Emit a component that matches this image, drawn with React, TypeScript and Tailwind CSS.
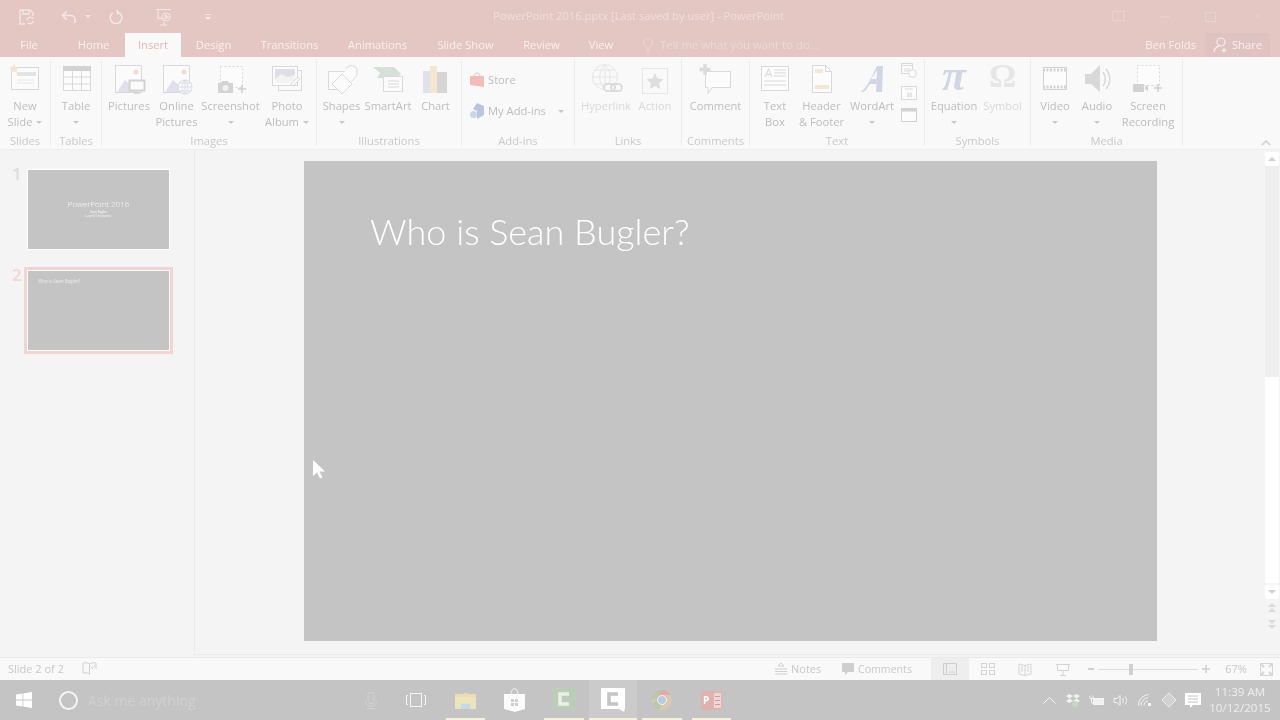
import type { ReactNode } from "react";

const line = "#d9d9d9";
const soft = "#e6e6e6";

function Box({ children }: { children: ReactNode }) {
  return (
    <svg viewBox="0 0 40 38" className="h-[38px] w-[40px] shrink-0" fill="none" aria-hidden>
      {children}
    </svg>
  );
}

const icons: Record<string, ReactNode> = {
  newSlide: (
    <Box>
      <rect x="6.5" y="7.5" width="27" height="22" fill="#fbfbfb" stroke={line} />
      <rect x="12" y="12" width="19" height="4" fill="#e4e4e4" />
      <path d="M12 20h17M12 23h17" stroke={soft} />
      <path d="M9 4l1.5 3 3 .5-2 2.5.5 3-3-1.5-3 1.5.5-3-2-2.5 3-.5z" fill="#f4e4cf" />
    </Box>
  ),
  table: (
    <Box>
      <rect x="7.5" y="6.5" width="27" height="24" fill="#fcfcfc" stroke={line} />
      <rect x="7" y="6" width="28" height="5" fill="#d2d2d2" />
      <path d="M7 17h28M7 24h28M16.5 11v19M25.5 11v19" stroke={line} />
    </Box>
  ),
  pictures: (
    <Box>
      <rect x="6.5" y="5.5" width="26" height="27" fill="#fbfbfb" stroke={line} />
      <circle cx="27" cy="12" r="2.5" fill="#f2d9d6" />
      <path d="M8 32l8-12 8 7 4 5z" fill="#e1e1ec" />
      <rect x="20.5" y="20.5" width="15" height="10" fill="#fbfbfb" stroke="#d2d2d2" strokeWidth="2" />
      <path d="M25 33h6" stroke="#d2d2d2" strokeWidth="1.5" />
    </Box>
  ),
  online: (
    <Box>
      <rect x="6.5" y="5.5" width="26" height="27" fill="#fbfbfb" stroke={line} />
      <circle cx="27" cy="12" r="2.5" fill="#f2d9d6" />
      <path d="M8 32l8-12 8 7 4 5z" fill="#e1e1ec" />
      <circle cx="28" cy="27" r="7" fill="#fbfbfb" stroke="#d3d8e6" />
      <path d="M21 27h14M28 20v14M23 23h10M23 31h10M28 20c-4 4-4 10 0 14M28 20c4 4 4 10 0 14" stroke="#d3d8e6" strokeWidth="0.8" />
    </Box>
  ),
  screenshot: (
    <Box>
      <rect x="9.5" y="6.5" width="22" height="21" fill="#fcfcfc" stroke={line} strokeDasharray="2 2" />
      <path d="M7 23h3l1-2h6l1 2h4v10H7z" fill="#d3d3d3" />
      <circle cx="14.5" cy="28" r="3" fill="#f2f2f2" />
      <path d="M31 25v8M27 29h8" stroke="#d0d0d0" strokeWidth="1.6" />
    </Box>
  ),
  album: (
    <Box>
      <rect x="11.5" y="10.5" width="23" height="20" fill="#fafafa" stroke={line} />
      <rect x="5.5" y="6.5" width="25" height="19" fill="#fbfbfb" stroke={line} />
      <rect x="8" y="9" width="20" height="14" fill="#dedee4" />
      <path d="M8 19l6-5 7 3 7-2v8H8z" fill="#f3f3f3" />
      <path d="M24 24l7-7 2 2-7 7z" fill="#fbfbfb" stroke={line} />
    </Box>
  ),
  shapes: (
    <Box>
      <rect x="6.5" y="11.5" width="18" height="18" fill="#fbfbfb" stroke={line} />
      <path d="M24 9c3-6 12-4 11 4-.5 5-6 9-11 13-1-1-4-4-6-6" fill="#fbfbfb" stroke={line} />
      <path d="M20 14l10 10-10 10-10-10z" fill="#fbfbfb" stroke={line} />
    </Box>
  ),
  smartart: (
    <Box>
      <path d="M5 7h21l7 7-4 4H9l3-5z" fill="#d4e0d8" />
      <rect x="15.5" y="16.5" width="19" height="15" fill="#fbfbfb" stroke={line} />
      <path d="M20 21h11M20 24h11M20 27h11" stroke={line} />
    </Box>
  ),
  chart: (
    <Box>
      <rect x="7" y="11" width="8" height="22" fill="#e0e1ec" />
      <rect x="14" y="6" width="7" height="27" fill="#f4e7cf" />
      <rect x="21" y="12" width="10" height="21" fill="#d5d5d5" />
    </Box>
  ),
  hyperlink: (
    <Box>
      <circle cx="19" cy="17" r="12.5" stroke={soft} />
      <path d="M6.5 17h25M19 4.500v25M9 10h20M9 24h20M19 4.500c-7 7-7 18 0 25M19 4.500c7 7 7 18 0 25" stroke={soft} />
      <rect x="18" y="24" width="11" height="7" rx="3.500" stroke="#dcdcdc" strokeWidth="2" fill="#fafafa" />
      <rect x="25" y="24" width="11" height="7" rx="3.500" stroke="#dcdcdc" strokeWidth="2" />
    </Box>
  ),
  action: (
    <Box>
      <rect x="7.500" y="8.500" width="25" height="25" stroke={soft} />
      <path d="M20 13l2.500 5.500 6 .7-4.500 4 1.300 5.800-5.300-3-5.300 3 1.300-5.800-4.500-4 6-.7z" fill="#dedede" />
    </Box>
  ),
  comment: (
    <Box>
      <path d="M9.500 11.500h25v16H16l-4 6v-6H9.500z" fill="#fcfcfc" stroke={line} />
      <path d="M9 4v11M3.500 9.500h11" stroke="#dcdcdc" strokeWidth="3.500" />
    </Box>
  ),
  textBox: (
    <Box>
      <rect x="6.500" y="6.500" width="27" height="24" fill="#fcfcfc" stroke={line} />
      <path d="M10 17l3.500-8 3.500 8M11.500 14.500h4" stroke="#dcdfe9" strokeWidth="1.300" />
      <path d="M19 10h12M19 13h12M19 16h12M9 21h22M9 25h22" stroke={line} />
    </Box>
  ),
  header: (
    <Box>
      <path d="M10.500 5.500h13l6 6v21h-19z" fill="#fcfcfc" stroke={line} />
      <path d="M23.500 5.500v6h6" stroke={line} />
      <rect x="13" y="9" width="8" height="4" fill="#f3e6d2" />
      <rect x="13" y="25" width="14" height="4" fill="#f3e6d2" />
    </Box>
  ),
  wordArt: (
    <Box>
      <path fillRule="evenodd" d="M8 32c6-2 11-14 17-26h6l-1 26h-6l.5-8h-7l-3.500 6-3 2zM19 19h5.500l.5-9z" fill="#d0d6e4" />
    </Box>
  ),
  video: (
    <Box>
      <rect x="8.500" y="7.500" width="23" height="22" fill="#fcfcfc" stroke="#d2d2d2" />
      <path d="M8 10h24M8 27h24" stroke="#d2d2d2" strokeWidth="3" strokeDasharray="2 1.500" />
    </Box>
  ),
  audio: (
    <Box>
      <path d="M8 14h6l9-9v27l-9-8H8z" fill="#d8d8d8" />
      <path d="M26 12c3 4 3 10 0 14M29 9c5 6 5 14 0 20" stroke="#d8d8d8" strokeWidth="1.500" />
    </Box>
  ),
  screenRec: (
    <Box>
      <rect x="9.500" y="5.500" width="22" height="20" fill="#fcfcfc" stroke={line} strokeDasharray="2 2" />
      <rect x="5" y="24" width="11" height="8" fill="#d3d3d3" />
      <path d="M17 27l3-2v6l-3-2z" fill="#d3d3d3" />
      <path d="M30 24v8M26 28h8" stroke="#d0d0d0" strokeWidth="1.600" />
    </Box>
  ),
};

type Btn = { w: string; icon: ReactNode; a: string; b?: string; caret?: "line" | "inline"; off?: boolean };

function Caret({ className = "" }: { className?: string }) {
  return <span className={`inline-block h-0 w-0 border-x-[3px] border-t-[3px] border-x-transparent border-t-[#c9c9c9] ${className}`} />;
}

function RibbonButton({ w, icon, a, b, caret, off }: Btn) {
  return (
    <div className={`flex shrink-0 flex-col items-center ${w} ${off ? "text-[#d9d9d9]" : "text-[#bdbdbd]"}`}>
      <div className="flex h-[38px] shrink-0 items-start justify-center">{icon}</div>
      <span className="whitespace-nowrap leading-4">{a}</span>
      {b && (
        <span className="flex items-center gap-1 whitespace-nowrap leading-4">
          {b}
          {caret === "inline" && <Caret />}
        </span>
      )}
      {caret === "line" && <Caret className="mt-[7px]" />}
    </div>
  );
}

function Group({ w, label, pad, children }: { w: string; label: string; pad: string; children: ReactNode }) {
  return (
    <section className={`flex h-full shrink-0 flex-col border-r border-[#ececec] ${w}`}>
      <div className={`flex h-[73px] shrink-0 ${pad}`}>{children}</div>
      <div className="h-4 shrink-0 text-center leading-4 text-[#c9c9c9]">{label}</div>
    </section>
  );
}

function RibbonTab({ w, label, active }: { w: string; label: string; active?: boolean }) {
  return (
    <div
      className={`flex h-6 shrink-0 items-center justify-center ${w} ${
        active ? "bg-[#f9f9f9] text-[#e4b7b3]" : "text-[#f9f0ef]"
      }`}
    >
      {label}
    </div>
  );
}

function Ribbon() {
  return (
    <div className="flex h-[93px] shrink-0 border-b border-[#eeeeee] bg-[#f9f9f9] pt-[3px] pb-[3px] text-[11.2px]">
      <Group w="w-[51px]" label="Slides" pad="">
        <RibbonButton w="w-[50px]" icon={icons.newSlide} a="New" b="Slide" caret="inline" />
      </Group>
      <Group w="w-[51px]" label="Tables" pad="">
        <RibbonButton w="w-[50px]" icon={icons.table} a="Table" caret="line" />
      </Group>
      <Group w="w-[215px]" label="Images" pad="pl-[3px]">
        <RibbonButton w="w-[48px]" icon={icons.pictures} a="Pictures" />
        <RibbonButton w="w-[47px]" icon={icons.online} a="Online" b="Pictures" />
        <RibbonButton w="w-[61px]" icon={icons.screenshot} a="Screenshot" caret="line" />
        <RibbonButton w="w-[52px]" icon={icons.album} a="Photo" b="Album" caret="inline" />
      </Group>
      <Group w="w-[145px]" label="Illustrations" pad="pl-[2px]">
        <RibbonButton w="w-[45px]" icon={icons.shapes} a="Shapes" caret="line" />
        <RibbonButton w="w-[48px]" icon={icons.smartart} a="SmartArt" />
        <RibbonButton w="w-[47px]" icon={icons.chart} a="Chart" />
      </Group>
      <Group w="w-[113px]" label="Add-ins" pad="flex-col pl-[8px] pt-[11px] gap-[13px] text-[#bdbdbd]">
        <div className="flex h-[18px] items-center gap-[4px]">
          <svg viewBox="0 0 14 16" className="h-4 w-[14px]" aria-hidden>
            <path d="M0 4h14v11l-14-2z" fill="#f1bdb8" />
            <path d="M4 4c0-4 6-4 6 0" stroke="#f1bdb8" fill="none" />
          </svg>
          Store
        </div>
        <div className="flex h-[18px] items-center gap-[4px]">
          <svg viewBox="0 0 14 16" className="h-4 w-[14px]" aria-hidden>
            <path d="M7 0l7 3v9l-7 4V8L3 6z" fill="#b9c6dd" />
            <circle cx="3.500" cy="11.500" r="3.500" fill="#ccd6e8" />
          </svg>
          My Add-ins
          <Caret className="ml-[8px]" />
        </div>
      </Group>
      <Group w="w-[107px]" label="Links" pad="pl-[4px]">
        <RibbonButton w="w-[54px]" icon={icons.hyperlink} a="Hyperlink" off />
        <RibbonButton w="w-[44px]" icon={icons.action} a="Action" off />
      </Group>
      <Group w="w-[68px]" label="Comments" pad="">
        <RibbonButton w="w-[67px]" icon={icons.comment} a="Comment" />
      </Group>
      <Group w="w-[175px]" label="Text" pad="pl-[4px]">
        <RibbonButton w="w-[42px]" icon={icons.textBox} a="Text" b="Box" />
        <RibbonButton w="w-[51px]" icon={icons.header} a="Header" b="&amp; Footer" />
        <RibbonButton w="w-[50px]" icon={icons.wordArt} a="WordArt" caret="line" />
        <div className="flex w-[24px] flex-col items-center gap-[8px] pt-[3px]">
          <svg viewBox="0 0 16 15" className="h-[15px] w-4" fill="none" aria-hidden>
            <rect x="0.500" y="0.500" width="11" height="10" fill="#fbfbfb" stroke={line} />
            <path d="M0 2.500h12M3 6h6M3 8h6" stroke="#dcdcdc" />
            <circle cx="11.500" cy="10.500" r="3.800" fill="#fbfbfb" stroke={line} />
          </svg>
          <svg viewBox="0 0 16 14" className="h-[14px] w-4" fill="none" aria-hidden>
            <rect x="0.500" y="0.500" width="15" height="13" fill="#fcfcfc" stroke={line} />
            <path d="M4 3h8M6 8h5M6 10h5M7 6.500v5M10 6.500v5" stroke="#d6d6d6" strokeWidth="0.800" />
          </svg>
          <svg viewBox="0 0 16 14" className="h-[14px] w-4" fill="none" aria-hidden>
            <rect x="0.500" y="0.500" width="15" height="13" fill="#fcfcfc" stroke="#d2d2d2" />
            <rect x="0" y="0" width="16" height="3.500" fill="#d2d2d2" />
          </svg>
        </div>
      </Group>
      <Group w="w-[106px]" label="Symbols" pad="pl-[4px]">
        <div className="flex w-[50px] shrink-0 flex-col items-center text-[#bdbdbd]">
          <span className="flex h-[38px] shrink-0 items-start font-['Liberation_Serif',serif] text-[44px] italic leading-[32px] font-bold text-[#d0d6e4]">π</span>
          <span className="leading-4">Equation</span>
          <Caret className="mt-[7px]" />
        </div>
        <div className="flex w-[47px] shrink-0 flex-col items-center text-[#d9d9d9]">
          <span className="flex h-[38px] shrink-0 items-start font-['Liberation_Serif',serif] text-[34px] leading-[32px] font-bold text-[#e6e6e6]">Ω</span>
          <span className="leading-4">Symbol</span>
        </div>
      </Group>
      <Group w="w-[152px]" label="Media" pad="pl-[3px]">
        <RibbonButton w="w-[42px]" icon={icons.video} a="Video" caret="line" />
        <RibbonButton w="w-[42px]" icon={icons.audio} a="Audio" caret="line" />
        <RibbonButton w="w-[60px]" icon={icons.screenRec} a="Screen" b="Recording" />
      </Group>
      <div className="flex flex-1 items-end justify-end pr-[9px]">
        <svg viewBox="0 0 10 6" className="h-[6px] w-[10px]" fill="none" aria-hidden>
          <path d="M1 5l4-4 4 4" stroke="#cfcfcf" strokeWidth="1.500" />
        </svg>
      </div>
    </div>
  );
}

function TitleBar() {
  return (
    <div className="flex h-[33px] shrink-0 items-center bg-[#e4c6c3]">
      <div className="flex w-[493px] shrink-0 items-center pl-[19px]">
        <svg viewBox="0 0 16 16" className="h-4 w-4" fill="none" stroke="#f5e7e5" strokeWidth="1.300" aria-hidden>
          <path d="M1 1h10l3 3v3M1 1v14h5M4 1v4h6V1" />
          <path d="M8 11a3.500 3.500 0 016-1.500M14.500 12a3.500 3.500 0 01-6 1.500" />
        </svg>
        <svg viewBox="0 0 16 14" className="ml-[26px] h-[14px] w-4" fill="none" stroke="#f5e7e5" strokeWidth="1.600" aria-hidden>
          <path d="M6 1L1.500 5.500 6 10M2 5.500h8a4 4 0 014 4V13" />
        </svg>
        <Caret className="ml-[8px] border-t-[#f5e7e5]" />
        <svg viewBox="0 0 14 14" className="ml-[18px] h-[14px] w-[14px]" fill="none" stroke="#f5e7e5" strokeWidth="1.600" aria-hidden>
          <path d="M8.500 2.200A5.800 5.800 0 113.500 3.200M8.500 0v4.500" />
        </svg>
        <svg viewBox="0 0 18 18" className="ml-[32px] h-[18px] w-[18px]" fill="none" stroke="#f5e7e5" strokeWidth="1.100" aria-hidden>
          <path d="M1 1.500h15M3 1.500v9h5M9 14v3M5 17h7" />
          <circle cx="11" cy="9" r="4" />
          <path d="M10 7l3 2-3 2z" />
        </svg>
        <svg viewBox="0 0 8 8" className="ml-[31px] h-2 w-2" fill="#f5e7e5" aria-hidden>
          <path d="M1 1h6v1H1zM1 4h6L4 7z" />
        </svg>
      </div>
      <div className="whitespace-nowrap text-[11.2px] text-[#f0dedc]">PowerPoint 2016.pptx [Last saved by user] - PowerPoint</div>
      <div className="ml-auto flex items-center pr-[19px]">
        <svg viewBox="0 0 149 12" className="h-3 w-[149px]" fill="none" stroke="#e9d3d0" aria-hidden>
          <rect x="0.500" y="0.500" width="12" height="9" />
          <path d="M48 6h10" />
          <rect x="93.500" y="1.500" width="10" height="9" />
          <path d="M143 2l6 6M149 2l-6 6" />
        </svg>
      </div>
    </div>
  );
}

function TabRow() {
  return (
    <div className="flex h-6 shrink-0 items-center bg-[#e4c6c3] text-[11.2px]">
      <RibbonTab w="w-[58px] mr-[4px]" label="File" />
      <RibbonTab w="w-[63px]" label="Home" />
      <RibbonTab w="w-[56px]" label="Insert" active />
      <RibbonTab w="w-[65px]" label="Design" />
      <RibbonTab w="w-[87px]" label="Transitions" />
      <RibbonTab w="w-[89px]" label="Animations" />
      <RibbonTab w="w-[87px]" label="Slide Show" />
      <RibbonTab w="w-[65px]" label="Review" />
      <RibbonTab w="w-[54px]" label="View" />
      <div className="ml-[15px] flex items-center gap-[7px] text-[11.400px] text-[#eed9d7]">
        <svg viewBox="0 0 10 14" className="h-[14px] w-[10px]" fill="none" stroke="#eed9d7" aria-hidden>
          <path d="M3 10c0-2-2.500-3-2.500-5.500a4.500 4.500 0 019 0C9.500 7 7 8 7 10zM3.500 12h3M4 13.500h2" />
        </svg>
        Tell me what you want to do...
      </div>
      <div className="ml-auto text-[#f9f0ef]">Ben Folds</div>
      <div className="ml-[9px] mr-[10px] flex h-6 w-[65px] items-center justify-center gap-[3px] bg-[#dfc3c0] text-[#f9f0ef]">
        <svg viewBox="0 0 16 16" className="h-4 w-4" fill="none" stroke="#f9f0ef" strokeWidth="1.100" aria-hidden>
          <circle cx="8" cy="5" r="4" />
          <path d="M1 15c0-3 2-5 5-6M11 11v5M8.500 13.500h5" />
        </svg>
        Share
      </div>
    </div>
  );
}

function Thumb({ n, active, children }: { n: number; active?: boolean; children: ReactNode }) {
  return (
    <div className="flex items-start">
      <span className={`w-[24px] pl-[12px] text-[17px] leading-[16px] font-semibold ${active ? "text-[#f0d5d3]" : "text-[#dcdcdc]"}`}>{n}</span>
      <div className={`border-[3px] ${active ? "border-[#f0d5d3]" : "border-transparent"}`}>
        <div className="h-[81px] w-[143px] border border-white bg-[#c4c4c4]">{children}</div>
      </div>
    </div>
  );
}

function Sidebar() {
  return (
    <aside className="flex w-[195px] shrink-0 flex-col gap-[14px] border-r border-[#ebebeb] pt-[16px]">
      <Thumb n={1}>
        <div className="flex h-full flex-col items-center pt-[28px] text-white">
          <span className="text-[8px] leading-[12px] font-light">PowerPoint 2016</span>
          <span className="text-[3px] leading-[4px]">Sean Bugler</span>
          <span className="text-[3px] leading-[4px]">Learn IT Instructor</span>
        </div>
      </Thumb>
      <Thumb n={2} active>
        <div className="pl-[10px] pt-[7px] text-[4.500px] leading-[6px] text-[#ececec]">Who is Sean Bugler?</div>
      </Thumb>
    </aside>
  );
}

function Scrollbar() {
  const btn = "flex h-[14px] w-[14px] items-center justify-center bg-white";
  return (
    <div className="flex w-[15px] shrink-0 flex-col pt-[2px]">
      <div className={btn}>
        <svg viewBox="0 0 8 4" className="h-1 w-2" fill="#cfcfcf" aria-hidden><path d="M4 0l4 4H0z" /></svg>
      </div>
      <div className="h-[211px] w-[14px] bg-[#eeeeee]" />
      <div className="h-[206px] w-[14px] bg-white" />
      <div className={`${btn} mt-[2px]`}>
        <svg viewBox="0 0 8 4" className="h-1 w-2" fill="#cfcfcf" aria-hidden><path d="M4 4l4-4H0z" /></svg>
      </div>
      <svg viewBox="0 0 8 10" className="mt-[4px] ml-[3px] h-[10px] w-2" fill="#d9d9d9" aria-hidden><path d="M4 0l4 4H0zM4 5l4 4H0z" /></svg>
      <svg viewBox="0 0 8 10" className="mt-[7px] ml-[3px] h-[10px] w-2" fill="#d9d9d9" aria-hidden><path d="M4 4l4-4H0zM4 9l4-4H0z" /></svg>
    </div>
  );
}

function Editor() {
  return (
    <main className="relative flex min-w-0 flex-1 flex-col">
      <div className="flex min-h-0 flex-1">
        <div className="flex-1 pl-[109px] pt-[11px]">
          <div className="h-[480px] w-[853px] bg-[#c4c4c4] pl-[66px] pt-[43px] font-['Lato',sans-serif] text-[36px] leading-[54px] font-light text-white">
            Who is Sean Bugler?
          </div>
        </div>
        <Scrollbar />
      </div>
      <div className="h-[3px] border-t border-[#e9e9e9]" />
      {/* mouse pointer over the slide */}
      <svg viewBox="0 0 12 19" className="absolute left-[118px] top-[310px] h-[19px] w-3" aria-hidden>
        <path d="M0 0v16l4-3.500 3 6 2.500-1-3-6H12z" fill="#fff" />
      </svg>
    </main>
  );
}

function StatusBar() {
  return (
    <footer className="flex h-[23px] shrink-0 items-center border-t border-[#e9e9e9] bg-[#f9f9f9] text-[11px] text-[#c8c8c8]">
      <span className="ml-[8px] w-[74px]">Slide 2 of 2</span>
      <svg viewBox="0 0 15 14" className="h-[14px] w-[15px]" fill="none" stroke="#d0d0d0" aria-hidden>
        <path d="M7.500 2C5 .5 3 .5 1 1v10c2-.5 4-.5 6.500 1zM7.500 2C10 .5 12 .5 14 1v6M9 5l1.500 1.500L13 3" />
      </svg>
      <svg viewBox="0 0 14 12" className="ml-[677px] h-3 w-[14px]" fill="none" stroke="#cfcfcf" aria-hidden>
        <path d="M7 0l3 3H4zM1 6h12M1 8.500h12M1 11h12" />
      </svg>
      <span className="ml-[1px] w-[53px] pl-[2px]">Notes</span>
      <svg viewBox="0 0 12 12" className="h-3 w-3" fill="#cfcfcf" aria-hidden>
        <path d="M0 0h12v9H6l-3 3V9H0z" />
      </svg>
      <span className="ml-[4px] w-[73px] pt-[1px] text-[10.600px]">Comments</span>
      <div className="flex h-full w-[38px] items-center justify-center bg-[#eeeeee]">
        <svg viewBox="0 0 14 12" className="h-3 w-[14px]" fill="none" stroke="#cfcfcf" aria-hidden>
          <rect x="0.500" y="0.500" width="13" height="11" />
          <path d="M3.500 0v12M6 9h6" />
        </svg>
      </div>
      <svg viewBox="0 0 14 12" className="ml-[12px] h-3 w-[14px]" fill="none" stroke="#d4d4d4" aria-hidden>
        <rect x="0.500" y="0.500" width="5" height="4" /><rect x="8.500" y="0.500" width="5" height="4" />
        <rect x="0.500" y="7.500" width="5" height="4" /><rect x="8.500" y="7.500" width="5" height="4" />
      </svg>
      <svg viewBox="0 0 14 13" className="ml-[23px] h-[13px] w-[14px]" fill="none" stroke="#d4d4d4" aria-hidden>
        <path d="M1 1l6 1.500L13 1v10l-6 1.500L1 11zM7 2.500v10M3 4h2M3 6h2M3 8h2M9 4h2M9 6h2M9 8h2" />
      </svg>
      <svg viewBox="0 0 14 13" className="ml-[24px] h-[13px] w-[14px]" fill="none" stroke="#d4d4d4" aria-hidden>
        <path d="M0 1.500h14M1.500 1.500v6h11v-6M7 7.500V13M4 12.500h6" />
      </svg>
      <span className="ml-[18px] h-[2px] w-[6px] bg-[#cfcfcf]" />
      <div className="relative ml-[4px] h-[1px] w-[100px] bg-[#dedede]">
        <span className="absolute left-[31px] top-[-5px] h-[11px] w-[4px] bg-[#d0d0d0]" />
      </div>
      <svg viewBox="0 0 8 8" className="ml-[4px] h-2 w-2" stroke="#cfcfcf" strokeWidth="1.500" aria-hidden>
        <path d="M4 0v8M0 4h8" />
      </svg>
      <span className="ml-[11px] w-[30px] text-center">67%</span>
      <svg viewBox="0 0 13 13" className="ml-[9px] h-[13px] w-[13px]" fill="none" stroke="#d6d6d6" aria-hidden>
        <rect x="0.500" y="0.500" width="12" height="12" />
        <path d="M1 1l3 3M12 1L9 4M1 12l3-3M12 12L9 9" strokeWidth="2" />
      </svg>
    </footer>
  );
}

function TaskIcon({ w, active, on, children }: { w: string; active?: boolean; on?: boolean; children: ReactNode }) {
  return (
    <div className={`relative flex h-full shrink-0 items-center justify-center ${w} ${active ? "bg-[#cbcbcb]" : ""}`}>
      {children}
      {on && <span className={`absolute bottom-0 h-[2px] bg-[#f4f3d9] ${active ? "inset-x-0" : "inset-x-[5px]"}`} />}
    </div>
  );
}

function Tray({ children }: { children: ReactNode }) {
  return <div className="flex w-6 shrink-0 justify-center">{children}</div>;
}

function Taskbar() {
  return (
    <div className="flex h-10 shrink-0 items-center bg-[#c4c4c4] text-[#f1f1f1]">
      <div className="flex w-[48px] shrink-0 justify-center">
        <svg viewBox="0 0 16 16" className="h-4 w-4" fill="#fff" aria-hidden>
          <path d="M0 2.500l6.500-.9v6H0zM7.300 1.500L16 0v7.600H7.300zM0 8.400h6.500v6L0 13.500zM7.300 8.400H16V16l-8.700-1.400z" />
        </svg>
      </div>
      <div className="flex w-[343px] shrink-0 items-center pl-[11px]">
        <span className="h-[19px] w-[19px] rounded-full border-2 border-[#f5f5f5]" />
        <span className="ml-[10px] text-[14px] text-[#d0d0d0]">Ask me anything</span>
        <svg viewBox="0 0 12 17" className="ml-[169px] h-[17px] w-3" fill="none" stroke="#d2d2d2" aria-hidden>
          <rect x="3" y="0.500" width="6" height="11" rx="2" />
          <path d="M.5 9c0 7 11 7 11 0M2 16.500h8" />
        </svg>
      </div>
      <TaskIcon w="w-[50px]">
        <svg viewBox="0 0 20 14" className="h-[14px] w-5" fill="none" stroke="#f5f5f5" aria-hidden>
          <rect x="4.500" y="0.500" width="11" height="13" />
          <path d="M2 2.500H.5v9H2M18 2.500h1.500v9H18" />
        </svg>
      </TaskIcon>
      <TaskIcon w="w-[49px]" on>
        <svg viewBox="0 0 21 18" className="h-[18px] w-[21px]" aria-hidden>
          <path d="M0 3h8l1-1h3l1 1h8v15H0z" fill="#ecdcb0" />
          <rect x="0" y="6" width="21" height="12" fill="#ece3bf" />
          <rect x="6" y="13" width="9" height="5" fill="#c3dae9" />
        </svg>
      </TaskIcon>
      <TaskIcon w="w-[49px]">
        <svg viewBox="0 0 21 24" className="h-6 w-[21px]" aria-hidden>
          <path d="M7 6c0-7 7-7 7 0" stroke="#f5f5f5" fill="none" />
          <path d="M0 6h21v15L11 24 0 21z" fill="#fbfbfb" />
          <path d="M7 11h3v3H7zM11 11h3v3h-3zM7 15h3v3H7zM11 15h3v3h-3z" fill="#cfcfcf" />
        </svg>
      </TaskIcon>
      <TaskIcon w="w-[50px]" on>
        <svg viewBox="0 0 24 24" className="h-6 w-6" aria-hidden>
          <path d="M0 0h24v20l-1 4-5-3H0z" fill="#bccdb7" />
          <path d="M17 6H8v10h9" fill="none" stroke="#e9f0e6" strokeWidth="3.500" />
        </svg>
      </TaskIcon>
      <TaskIcon w="w-[48px]" active on>
        <svg viewBox="0 0 24 24" className="h-6 w-6" aria-hidden>
          <path d="M0 0h24v20l-1 4-5-3H0z" fill="#fff" />
          <path d="M17 6H8v10h9" fill="none" stroke="#c4c4c4" strokeWidth="3.500" />
        </svg>
      </TaskIcon>
      <TaskIcon w="w-[50px]" on>
        <svg viewBox="0 0 20 20" className="h-5 w-5" aria-hidden>
          <circle cx="10" cy="10" r="10" fill="#d9c9b0" />
          <path d="M10 0a10 10 0 018.700 5H10a5 5 0 00-4.500 3L2.500 3.500A10 10 0 0110 0z" fill="#e3a9a2" />
          <path d="M0 10a10 10 0 0110-10L5 8zM1 14l4-6 5 7-3 5a10 10 0 01-6-6z" fill="#b6c9ae" />
          <circle cx="10" cy="10" r="4.500" fill="#b9cbe0" stroke="#f2f2f2" />
        </svg>
      </TaskIcon>
      <TaskIcon w="w-[49px]" on>
        <div className="flex h-[19px] w-[21px] items-center bg-[#dfb2af] pl-[2px] text-[10px] leading-none font-bold text-white">
          P
          <span className="ml-auto mr-[1px] flex h-[15px] w-[7px] flex-col justify-evenly bg-[#eed6d4] px-[1px]">
            <span className="h-[1px] bg-[#d09a96]" />
            <span className="h-[1px] bg-[#d09a96]" />
            <span className="h-[1px] bg-[#d09a96]" />
          </span>
        </div>
      </TaskIcon>
      <div className="flex flex-1 items-center justify-end pr-[5px]">
        <Tray>
          <svg viewBox="0 0 13 7" className="h-[7px] w-[13px]" fill="none" stroke="#f5f5f5" aria-hidden><path d="M.5 6.500l6-6 6 6" /></svg>
        </Tray>
        <Tray>
          <svg viewBox="0 0 14 13" className="h-[13px] w-[14px]" fill="#f2f2f2" aria-hidden>
            <path d="M0 2l3.500-2L7 2 3.500 4.500zM7 2l3.500-2L14 2l-3.500 2.500zM0 7l3.500-2.500L7 7 3.500 9zM7 7l3.500-2.500L14 7l-3.500 2z" />
            <circle cx="9" cy="10" r="3" fill="#c3d8c3" />
          </svg>
        </Tray>
        <Tray>
          <svg viewBox="0 0 16 11" className="h-[11px] w-4" fill="none" stroke="#f5f5f5" aria-hidden>
            <rect x="4.500" y="3.500" width="10" height="6" fill="#f0f0f0" />
            <path d="M1 .5v3h3v-3M2.500 3.500V8H4" />
          </svg>
        </Tray>
        <Tray>
          <svg viewBox="0 0 16 13" className="h-[13px] w-4" fill="none" stroke="#f5f5f5" aria-hidden>
            <path d="M1 4.500h3l3-3v10l-3-3H1zM9.500 4c1 1.500 1 3.500 0 5M12 2.500c2 2 2 6 0 8" />
          </svg>
        </Tray>
        <Tray>
          <svg viewBox="0 0 14 12" className="h-3 w-[14px]" fill="none" stroke="#f5f5f5" aria-hidden>
            <path d="M.5 11.500c0-6 4-10 10-11M3 11.500c0-4 3-7 7-8M6 11.500c0-2 1.500-4 4-4.500" />
            <rect x="10" y="9" width="3" height="3" fill="#f5f5f5" stroke="none" />
          </svg>
        </Tray>
        <Tray>
          <svg viewBox="0 0 16 16" className="h-4 w-4" fill="#d2d2d2" stroke="#ececec" aria-hidden>
            <path d="M8 1l7 7-7 7-7-7z" />
          </svg>
        </Tray>
        <Tray>
          <svg viewBox="0 0 16 15" className="h-[15px] w-4" aria-hidden>
            <path d="M0 0h16v12H8l-3 3v-3H0z" fill="#fff" />
            <path d="M3 3h10M3 6h10M3 9h10" stroke="#c4c4c4" />
          </svg>
        </Tray>
        <div className="flex w-[70px] shrink-0 flex-col items-center text-[11.600px] leading-[16px] text-[#eeeeee]">
          <span>11:39 AM</span>
          <span>10/12/2015</span>
        </div>
      </div>
    </div>
  );
}

export default function App() {
  return (
    <div className="flex h-screen w-full flex-col overflow-hidden bg-[#f4f4f4] font-['Open_Sans',sans-serif] blur-[0.4px]">
      <TitleBar />
      <TabRow />
      <Ribbon />
      <div className="flex min-h-0 flex-1">
        <Sidebar />
        <Editor />
      </div>
      <StatusBar />
      <Taskbar />
    </div>
  );
}
